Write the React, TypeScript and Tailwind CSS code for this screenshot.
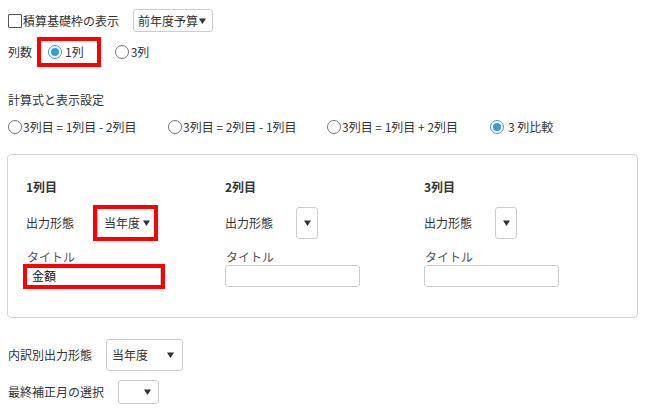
import React from 'react';

const font = 'font-["Noto_Sans_CJK_JP","Noto_Sans",sans-serif]';

const Radio: React.FC<{ checked?: boolean }> = ({ checked }) =>
  checked ? (
    <span className="w-[14px] h-[14px] rounded-full border border-[#3a9ad9] bg-white flex items-center justify-center shrink-0">
      <span className="w-[8px] h-[8px] rounded-full bg-[#3a9ad9]" />
    </span>
  ) : (
    <span className="w-[14px] h-[14px] rounded-full border border-[#767676] bg-white shrink-0" />
  );

const Arrow = () => (
  <svg width="7" height="6" viewBox="0 0 7 6" className="shrink-0">
    <path d="M0 0.5 H7 L3.5 6 Z" fill="#333" />
  </svg>
);

const Select: React.FC<{ value?: string; w: string; h: string; pad?: string }> = ({ value, w, h, pad = 'px-[4px]' }) => (
  <div className={`${w} ${h} ${pad} border border-[#ccc] rounded-[3px] bg-white flex items-center justify-between whitespace-nowrap`}>
    <span className="text-[12px] text-[#333]">{value}</span>
    <Arrow />
  </div>
);

const RedMark: React.FC<{ cls: string }> = ({ cls }) => (
  <div className={`absolute border-4 border-[#f00] pointer-events-none ${cls}`} />
);

const Column: React.FC<{ title: string; value?: string; text?: string; marked?: boolean }> = ({ title, value, text, marked }) => (
  <div className="flex flex-col">
    <div className="font-bold text-[12px] leading-[16px] text-[#333]">{title}</div>
    <div className="flex items-center mt-[12px]">
      <span className="w-[71px] text-[12px] text-[#333]">出力形態</span>
      <div className="relative">
        {marked ? (
          <Select value={value} w="w-[60px]" h="h-[32px]" pad="pl-[6px] pr-[6px]" />
        ) : (
          <Select w="w-[22px]" h="h-[32px]" pad="px-[7px]" />
        )}
        {marked && <RedMark cls="-left-[4px] -right-[1px] -top-[2px] -bottom-[2px]" />}
      </div>
    </div>
    <div className="text-[12px] leading-[16px] text-[#555] mt-[10px] ml-[1px]">タイトル</div>
    <div className="relative w-[135px]">
      <div className="h-[22px] border border-[#ccc] rounded-[3px] bg-white flex items-center px-[5px] text-[12px] text-[#111]">
        {text}
      </div>
      {marked && <RedMark cls="-left-[3px] -right-[4px] -top-[1px] -bottom-[2px]" />}
    </div>
  </div>
);

export default function App() {
  return (
    <div className={`${font} w-[653px] h-[415px] bg-white text-[#333] text-[12px] overflow-hidden`}>
      <div className="flex items-center pt-[9px] pl-[8px]">
        <span className="w-[14px] h-[14px] border border-[#555] bg-white rounded-[1px]" />
        <span className="ml-[1px]">積算基礎枠の表示</span>
        <div className="ml-[14px]">
          <Select value="前年度予算" w="w-[80px]" h="h-[23px]" pad="pl-[4px] pr-[6px]" />
        </div>
      </div>

      <div className="flex items-center mt-[7px] pl-[8px] h-[26px]">
        <span>列数</span>
        <div className="relative flex items-center ml-[16px]">
          <Radio checked />
          <span className="ml-[3px]">1列</span>
          <RedMark cls="-left-[11px] -right-[17px] -top-[6px] -bottom-[6px]" />
        </div>
        <div className="flex items-center ml-[31px]">
          <Radio />
          <span className="ml-[2px]">3列</span>
        </div>
      </div>

      <div className="pl-[8px] mt-[27px] leading-[16px]">計算式と表示設定</div>

      <div className="flex items-center pl-[8px] mt-[11px] h-[16px]">
        <div className="flex items-center w-[160px]">
          <Radio />
          <span className="ml-[1px]">3列目 = 1列目 - 2列目</span>
        </div>
        <div className="flex items-center w-[159px]">
          <Radio />
          <span className="ml-[1px]">3列目 = 2列目 - 1列目</span>
        </div>
        <div className="flex items-center w-[163px]">
          <Radio />
          <span className="ml-[1px]">3列目 = 1列目 + 2列目</span>
        </div>
        <div className="flex items-center">
          <Radio checked />
          <span className="ml-[4px]">3 列比較</span>
        </div>
      </div>

      <div className="ml-[7px] mt-[19px] w-[631px] h-[164px] border border-[#d4d4d4] rounded-[4px] pl-[18px] pt-[24px]">
        <div className="grid grid-cols-[199px_199px_199px]">
          <Column title="1列目" value="当年度" text="金額" marked />
          <Column title="2列目" />
          <Column title="3列目" />
        </div>
      </div>

      <div className="flex items-center pl-[8px] mt-[21px]">
        <span className="w-[98px]">内訳別出力形態</span>
        <Select value="当年度" w="w-[77px]" h="h-[32px]" pad="pl-[5px] pr-[8px]" />
      </div>

      <div className="flex items-center pl-[8px] mt-[9px]">
        <span className="w-[110px]">最終補正月の選択</span>
        <Select w="w-[41px]" h="h-[24px]" pad="pl-[4px] pr-[7px]" />
      </div>
    </div>
  );
}
